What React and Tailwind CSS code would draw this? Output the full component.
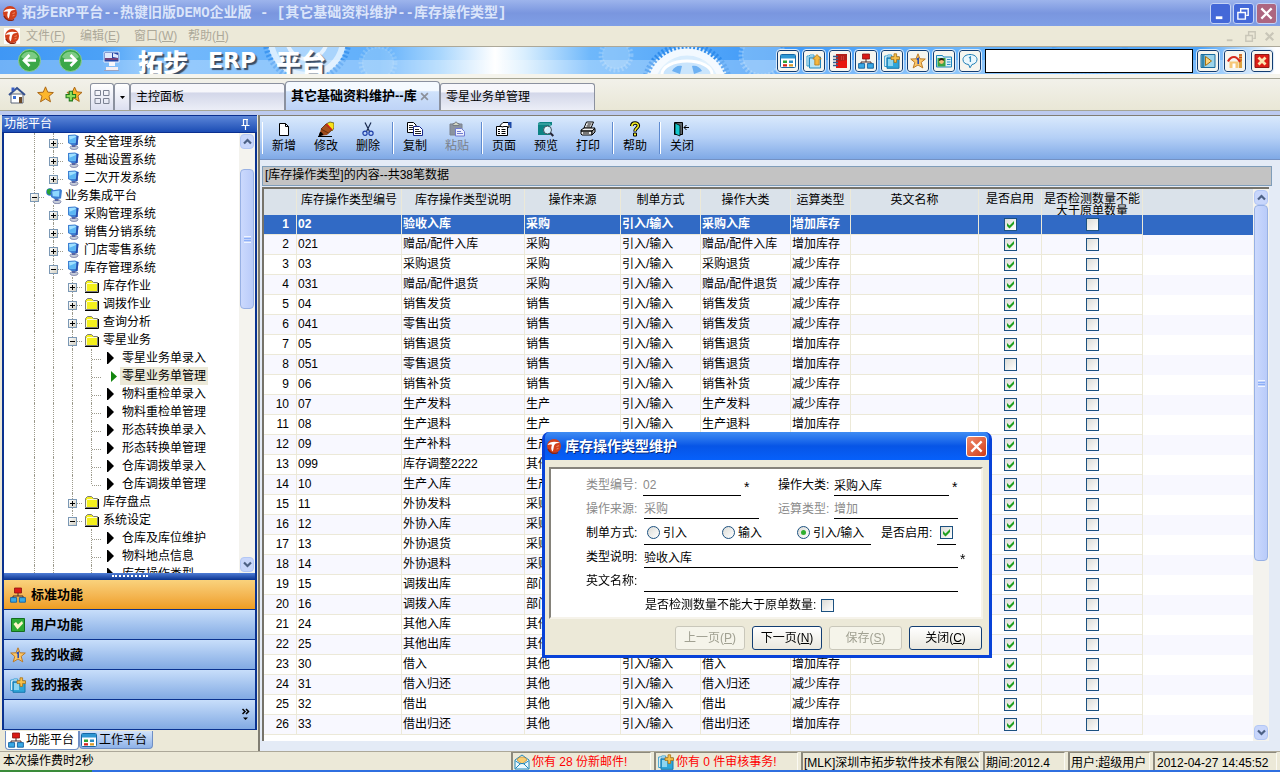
import React, { useState } from 'react';

const treeData = [
    { level: 2, type: 'plus', icon: 'pc', text: '安全管理系统' },
    { level: 2, type: 'plus', icon: 'pc', text: '基础设置系统' },
    { level: 2, type: 'plus', icon: 'pc', text: '二次开发系统', last: true },
    { level: 1, type: 'minus', icon: 'net', text: '业务集成平台' },
    { level: 2, type: 'plus', icon: 'pc', text: '采购管理系统' },
    { level: 2, type: 'plus', icon: 'pc', text: '销售分销系统' },
    { level: 2, type: 'plus', icon: 'pc', text: '门店零售系统' },
    { level: 2, type: 'minus', icon: 'pc', text: '库存管理系统' },
    { level: 3, type: 'plus', icon: 'folder', text: '库存作业' },
    { level: 3, type: 'plus', icon: 'folder', text: '调拨作业' },
    { level: 3, type: 'plus', icon: 'folder', text: '查询分析' },
    { level: 3, type: 'minus', icon: 'folder', text: '零星业务' },
    { level: 4, type: 'leaf', icon: 'arrow', text: '零星业务单录入' },
    { level: 4, type: 'leaf', icon: 'current', text: '零星业务单管理', selected: true },
    { level: 4, type: 'leaf', icon: 'arrow', text: '物料重检单录入' },
    { level: 4, type: 'leaf', icon: 'arrow', text: '物料重检单管理' },
    { level: 4, type: 'leaf', icon: 'arrow', text: '形态转换单录入' },
    { level: 4, type: 'leaf', icon: 'arrow', text: '形态转换单管理' },
    { level: 4, type: 'leaf', icon: 'arrow', text: '仓库调拨单录入' },
    { level: 4, type: 'leaf', icon: 'arrow', text: '仓库调拨单管理', last: true },
    { level: 3, type: 'plus', icon: 'folder', text: '库存盘点' },
    { level: 3, type: 'minus', icon: 'folder', text: '系统设定', last: true },
    { level: 4, type: 'leaf', icon: 'arrow', text: '仓库及库位维护', hideParent: true },
    { level: 4, type: 'leaf', icon: 'arrow', text: '物料地点信息', hideParent: true },
    { level: 4, type: 'leaf', icon: 'arrow', text: '库存操作类型', hideParent: true },
];

const rows = [
    ['02', '验收入库', '采购', '采购入库', '增加库存'],
    ['021', '赠品/配件入库', '采购', '赠品/配件入库', '增加库存'],
    ['03', '采购退货', '采购', '采购退货', '减少库存'],
    ['031', '赠品/配件退货', '采购', '赠品/配件退货', '减少库存'],
    ['04', '销售发货', '销售', '销售发货', '减少库存'],
    ['041', '零售出货', '销售', '销售发货', '减少库存'],
    ['05', '销售退货', '销售', '销售退货', '增加库存'],
    ['051', '零售退货', '销售', '销售退货', '增加库存'],
    ['06', '销售补货', '销售', '销售补货', '减少库存'],
    ['07', '生产发料', '生产', '生产发料', '减少库存'],
    ['08', '生产退料', '生产', '生产退料', '增加库存'],
    ['09', '生产补料', '生产', '生产补料', '减少库存'],
    ['099', '库存调整2222', '其他', '库存调整', '增加库存'],
    ['10', '生产入库', '生产', '生产入库', '增加库存'],
    ['11', '外协发料', '采购', '外协发料', '减少库存'],
    ['12', '外协入库', '采购', '外协入库', '增加库存'],
    ['13', '外协退货', '采购', '外协退货', '减少库存'],
    ['14', '外协退料', '采购', '外协退料', '增加库存'],
    ['15', '调拨出库', '部门', '调拨出库', '减少库存'],
    ['16', '调拨入库', '部门', '调拨入库', '增加库存'],
    ['24', '其他入库', '其他', '其他入库', '增加库存'],
    ['25', '其他出库', '其他', '其他出库', '减少库存'],
    ['30', '借入', '其他', '借入', '增加库存'],
    ['31', '借入归还', '其他', '借入归还', '减少库存'],
    ['32', '借出', '其他', '借出', '减少库存'],
    ['33', '借出归还', '其他', '借出归还', '增加库存'],
];

const headers = ['', '库存操作类型编号', '库存操作类型说明', '操作来源', '制单方式', '操作大类', '运算类型', '英文名称', '是否启用', '是否检测数量不能大于原单数量', ''];

/* ---------- icons ---------- */

function Icon({ size = 'size-4', children, box = '0 0 16 16' }) {
    return (
        <svg className={`${size} shrink-0`} viewBox={box} fill="none" aria-hidden="true">
            {children}
        </svg>
    );
}

const Logo = () => (
    <Icon>
        <circle cx="8" cy="8" r="7" fill="#d2401b" />
        <path d="M2 11a7 7 0 0 0 10 3.500" stroke="#8e2410" strokeWidth="1.400" />
        <path d="M1.500 7C3.500 3.500 8 3 14 4.600c-2.500.6-4.500.8-5.500 2.200-1 1.500-.6 4-1.800 6.700-1.700-1.300-1.800-4.300-.7-6.700-1.600-.5-3-.4-4.500.2z" fill="#fff" />
        <path d="M10.500 8.500l2.500-.8M10.500 11l2-.6" stroke="#f08a62" />
    </Icon>
);

const WindowGrid = () => (
    <Icon>
        <rect x=".5" y="1.500" width="15" height="13" rx="1" fill="#fff" stroke="#1667a5" />
        <path d="M1 2h14v3.500H1z" fill="#2f97d3" />
        <path d="M3 7.500h4v2.500H3z" fill="#2da336" />
        <path d="M9 7.500h4v2.500H9z" fill="#2a8cc4" />
        <path d="M3 11.200h4v2.300H3z" fill="#d4231a" />
        <path d="M9 11.200h4v2.300H9z" fill="#d99a2b" />
    </Icon>
);

const FolderUp = () => (
    <Icon>
        <path d="M1 13V3h2l1-1h4v2H3v9z" fill="#fff" stroke="#2c9bd0" />
        <path d="M3.500 15V5h4l1-1h6v11z" fill="#b8e4f6" stroke="#2287be" />
        <path d="M11 1.500l4.200 4.500h-2v6H8.800V6h-2z" fill="#f4b63e" stroke="#b87917" strokeWidth=".8" />
    </Icon>
);

const Notebook = () => (
    <Icon>
        <path d="M4 1h11v14H4z" fill="#e8150c" />
        <path d="M4 1h11v6L4 9z" fill="#b3201a" />
        <path d="M1 3.500h5M1 6.500h5M1 9.500h5M1 12.500h5" stroke="#355e8c" strokeWidth="1.500" />
        <path d="M9 4h4M9 6h4" stroke="#e9574c" strokeDasharray="1 1" />
    </Icon>
);

const OrgChart = () => (
    <Icon>
        <path d="M8 6v3M3 11V9h10v2" stroke="#4a2a2a" />
        <path d="M4.500 1h7v5h-7z" fill="#d91a16" stroke="#8b1210" strokeWidth=".8" />
        <path d="M.6 10.600h6v4.600h-6zM9.400 10.600h6v4.600h-6z" fill="#39a9e6" stroke="#155f9c" strokeWidth=".9" />
    </Icon>
);

const FolderPlus = () => (
    <Icon>
        <path d="M.7 13.500V3h2l1-1h4v2H3v9.500z" fill="#fff" stroke="#2c9bd0" />
        <path d="M3 15.300V5h4l1-1h7v11.300z" fill="#2fa5d8" stroke="#1877ad" />
        <path d="M4 6h5v7H4z" fill="#8dd5f0" />
        <path d="M10 .8h2.600v3h3v2.600h-3v3H10v-3H7V3.800h3z" fill="#f7c14b" stroke="#a86e12" strokeWidth=".8" />
    </Icon>
);

const StarOne = () => (
    <Icon>
        <path d="M8 .8l2 5 5.300.2-4.100 3.400 1.600 5.500L8 12l-4.800 2.900 1.600-5.500L.7 6 6 5.800z" fill="#fbc668" stroke="#b8731c" strokeWidth=".9" />
        <path d="M6.600 6.300l1.600-.8V11" stroke="#2248b4" strokeWidth="1.500" />
    </Icon>
);

const IdCard = () => (
    <Icon>
        <path d="M.5 2.500h6l1 1.500h8v10H.5z" fill="#d9f0fa" stroke="#1d86bd" />
        <path d="M1.500 5h8v8.500h-8z" fill="#39a442" />
        <circle cx="5.500" cy="8.500" r="2.400" fill="#f6bb75" />
        <path d="M2.800 8c0-4 5.400-4 5.400-.3L5.500 7z" fill="#291a10" />
        <path d="M11 6.500h3.500M11 9h3.500M11 11.500h3.500" stroke="#2b8cc4" />
    </Icon>
);

const Bubble = () => (
    <Icon>
        <path d="M8 1.500c4 0 7 2 7 5s-2.500 4.600-5 5L8 14.800 6.600 11.500C3 11.200 1 9.300 1 6.500s3-5 7-5z" fill="#eaf7fd" stroke="#1e7eb5" />
        <path d="M7 5l1.400-1v5" stroke="#3a8fc0" strokeWidth="1.300" />
    </Icon>
);

const PlayBox = () => (
    <Icon>
        <path d="M1 1.500h14v13H1z" fill="#9cd3ea" stroke="#1a6c9e" />
        <path d="M1.500 2h3v12h-3z" fill="#3487ad" />
        <path d="M5.500 3.500l6 4.500-6 4.500z" fill="#fdd682" stroke="#a5700e" />
    </Icon>
);

const HomeBox = () => (
    <Icon>
        <path d="M12 1h3v14h-3z" fill="#dda341" />
        <path d="M12 2h3M12 4.500h3M12 7h3" stroke="#c8441e" />
        <path d="M2.500 8.500h9V15h-9z" fill="#f6c878" />
        <path d="M5.500 10.500h3V15h-3z" fill="#fff" />
        <path d="M1 8.500C3 4.500 5 4 7 4s4 1.500 6 5" stroke="#d6281a" strokeWidth="2.200" />
    </Icon>
);

const CloseBox = () => (
    <Icon>
        <path d="M1 1.500h14v13H1z" fill="#dc1d16" stroke="#8f1713" />
        <path d="M4.500 4.500l7 7M11.500 4.500l-7 7" stroke="#fde5b0" strokeWidth="2.800" />
    </Icon>
);

const GreenCheck = () => (
    <Icon>
        <path d="M1.500 1.500h13v13h-13z" fill="#2dab34" stroke="#146d20" />
        <path d="M3.500 7l2.500-2 2 2.500L12 4l1 2.500-5.500 6z" fill="#fdf5c8" />
    </Icon>
);

const Mail = () => (
    <Icon>
        <path d="M1 6l7-5 7 5v9H1z" fill="#eaf8fe" stroke="#2187b8" />
        <path d="M3 6c1-4 9-4 10 0l-5 4z" fill="#f9cf73" stroke="#b9822a" strokeWidth=".7" />
        <path d="M1.500 14.500l5-5h3l5 5M1.500 7l5 3M14.500 7l-5 3" stroke="#2187b8" />
    </Icon>
);

const Computer = () => (
    <Icon>
        <path d="M3 1l7-.5 3.500 1.500-1 9-5 .5L3 9z" fill="#3d7fd2" />
        <path d="M4 2l6-.5 1 .8-.6 6.700-5.900-.6z" fill="#9fe0ff" />
        <path d="M4 6l7-3-.6 6-5.900-.6z" fill="#5ab6f4" />
        <path d="M12 2l1.500 0-1 9-2 .3z" fill="#2b4fae" />
        <ellipse cx="9" cy="13.500" rx="4" ry="2" fill="#c7cdda" stroke="#68709c" strokeWidth=".7" />
        <path d="M7 11h3.500v2H7z" fill="#5966a4" />
    </Icon>
);

const NetComputer = () => (
    <Icon>
        <circle cx="4" cy="4" r="3.800" fill="#3472cf" />
        <path d="M1 2c2-2 4-1.500 5 0L4 4l1 2-2 1-2-2z" fill="#28a234" />
        <path d="M5 2.500L14.500 1l1.500 1.500-1 8-6 .8L5 9z" fill="#3d7fd2" />
        <path d="M6.200 3.500L13.500 2.500l-.4 6.300-6.300-.6z" fill="#8fd8ff" />
        <ellipse cx="11" cy="13.700" rx="4" ry="2" fill="#c7cdda" stroke="#68709c" strokeWidth=".7" />
        <path d="M9 11h3.500v2H9z" fill="#5966a4" />
    </Icon>
);

const Folder = () => (
    <Icon>
        <path d="M1.500 13.500V4.500l2-2h4l2 2h4v9z" fill="#f4f01c" stroke="#7c7c7c" />
        <path d="M3 5.500h10M2.500 6v7" stroke="#fff" strokeWidth=".8" />
        <path d="M1 14.500h13.500V5" stroke="#000" />
    </Icon>
);

const Arrow = ({ green }) => (
    <Icon>
        {green ? <path d="M8 3l6 5.500L8 14z" fill="#13860f" /> : <path d="M4 2h1l6 6-6 6H4z" fill="#000" />}
    </Icon>
);

const treeIcons = {
    pc: <Computer />,
    net: <NetComputer />,
    folder: <Folder />,
    arrow: <Arrow />,
    current: <Arrow green />,
};

/* toolbar drawings */
const toolIcons = {
    add: (
        <Icon><path d="M3.500 2.500h6l3 3v9h-9z" fill="#fff" stroke="#000" /><path d="M9.500 2.500v3h3" stroke="#000" /></Icon>
    ),
    edit: (
        <Icon>
            <path d="M1 15l2-7 5-5 6 6-5 5z" fill="#9c4a1c" />
            <path d="M3 8l5-5 6 6-3.500 3z" fill="#a8501c" stroke="#3d1c08" strokeWidth=".6" />
            <path d="M8 3l4-2 4 1v5l-2 3z" fill="#f7e11b" stroke="#4a3d00" strokeWidth=".7" />
            <path d="M8.500 3l5.500 6" stroke="#d41c1c" strokeWidth="1.500" />
            <path d="M0 15.500h14M1 15l1.500-4 2.500 2.500z" stroke="#000" fill="#000" />
        </Icon>
    ),
    del: (
        <Icon>
            <path d="M5 1.500l4.500 9M11 1.500l-4.500 9" stroke="#1a2b50" strokeWidth="1.200" />
            <circle cx="5" cy="12.300" r="2.100" stroke="#1f3fa8" strokeWidth="1.200" />
            <circle cx="11" cy="12.300" r="2.100" stroke="#1f3fa8" strokeWidth="1.200" />
        </Icon>
    ),
    copy: (
        <Icon>
            <path d="M.5 1.500h6l2.500 2.500v7.500H.5z" fill="#fff" stroke="#000" />
            <path d="M2 4.500h4M2 6.500h5M2 8.500h5" stroke="#222" />
            <path d="M6.500 5.500h6l3 3v6h-9z" fill="#fff" stroke="#15268c" />
            <path d="M8 8.500h4M8 10.500h6M8 12.500h6" stroke="#222" />
        </Icon>
    ),
    paste: (
        <Icon>
            <path d="M1 3h12v11H1z" fill="#8b93a0" stroke="#7c838e" />
            <path d="M4 4.500V2.500h1.500l1-1.500h1l1 1.500H10v2z" fill="#d4d6c4" stroke="#777d85" />
            <path d="M6.500 7.500h6l3 3v4.500h-9z" fill="#eef0fd" stroke="#6f7bd0" />
            <path d="M8 10.500h4M8 12.500h6" stroke="#6f7bd0" />
        </Icon>
    ),
    page: (
        <Icon>
            <path d="M.5 5.500h11v9H.5z" fill="#fff" stroke="#000" />
            <path d="M2 8.500h2M5.500 8.500h4M2 10.500h2M5.500 10.500h4M2 12.500h2M5.500 12.500h4" stroke="#000" />
            <path d="M4 4.500l3-3h6v5l-2-1H8L6 6z" fill="#fff" stroke="#000" />
            <path d="M12 1h3.500v6H14V4h-2z" fill="#1c49a6" />
        </Icon>
    ),
    preview: (
        <Icon>
            <path d="M0 2l2-1h12v3l-2 1v9H0z" fill="#0c8383" />
            <path d="M0 3h12v9" stroke="#7fd0cc" strokeWidth=".7" />
            <circle cx="9.500" cy="9" r="4" fill="#d4eefa" stroke="#44525e" />
            <path d="M7.500 8.500a2 2 0 0 1 2-2" stroke="#fff" />
            <path d="M12.300 12l3 3" stroke="#223" strokeWidth="2" />
        </Icon>
    ),
    print: (
        <Icon>
            <path d="M6.500 1h7L11 7H4z" fill="#fff" stroke="#000" />
            <path d="M7.500 3h4M6.500 5h4" stroke="#000" />
            <path d="M1 9l3-2h11l-3 3H1zM1 10h11v4H2l-1-1z" fill="#f1f1f1" stroke="#000" />
            <path d="M12 10l3-2.500V11l-3 3z" fill="#aaa" stroke="#000" />
            <path d="M3 12h6" stroke="#000" />
        </Icon>
    ),
    help: (
        <Icon>
            <path d="M4.800 5c0-4 6.500-4 6.500-.3C11.300 7 8 7.200 8 10.500" stroke="#000" strokeWidth="3.600" />
            <path d="M4.800 5.500c0-4.500 6.500-4.500 6.500-.8C11.300 7 8 7.200 8 10" stroke="#f4ec24" strokeWidth="1.600" />
            <path d="M6.500 12h3v3h-3z" fill="#f4ec24" stroke="#000" />
        </Icon>
    ),
    close: (
        <Icon>
            <path d="M.5 1.500h8v12h-8z" fill="#5d6368" stroke="#000" />
            <path d="M1 2l5 2.500V15l-5-2z" fill="#14c6cc" stroke="#000" strokeWidth=".8" />
            <path d="M15 6.500h-5M12.500 4L10 6.500 12.500 9" stroke="#000" />
        </Icon>
    ),
};

function Gears() {
    return (
        <svg className="absolute left-0 top-0 h-full w-[1280px]" viewBox="0 0 1280 27" fill="none" aria-hidden="true">
            <circle cx="307" cy="-8" r="40" fill="#c6e3fc" opacity=".7" />
            <circle cx="307" cy="-8" r="40" stroke="#3f97f0" strokeWidth="9" strokeDasharray="2 2" />
            <circle cx="307" cy="-8" r="36" stroke="#d8edff" strokeWidth="6" />
            <circle cx="307" cy="-8" r="20" stroke="#fff" strokeWidth="4" opacity=".7" />
            <circle cx="378" cy="16" r="16" fill="#a8d4fb" opacity=".4" />
            <circle cx="378" cy="16" r="17" stroke="#a8d4fb" strokeWidth="5" strokeDasharray="2 2" opacity=".4" />
            <circle cx="616" cy="8" r="14" fill="#b5dafb" opacity=".4" />
            <circle cx="616" cy="8" r="15" stroke="#a8d4fb" strokeWidth="5" strokeDasharray="2 2" opacity=".5" />
            <circle cx="762" cy="8" r="20" fill="#b5dafb" opacity=".4" />
            <circle cx="762" cy="8" r="21" stroke="#a8d4fb" strokeWidth="5" strokeDasharray="2 2" opacity=".5" />
            <circle cx="687" cy="41" r="42" fill="#d7ecfd" />
            <circle cx="687" cy="41" r="42" stroke="#2f8cec" strokeWidth="8" strokeDasharray="2 2" />
            <circle cx="687" cy="41" r="36" stroke="#f2f9ff" strokeWidth="7" />
            <ellipse cx="687" cy="27" rx="25" ry="13" fill="#b9dcfb" stroke="#fff" strokeWidth="3" />
            <path d="M672 24c2-4 6-6 10-5l-2 8zM702 24c-2-4-6-6-10-5l2 8z" fill="#3e97ee" />
            <circle cx="1090" cy="-8" r="36" stroke="#4fa2f3" strokeWidth="6" strokeDasharray="2 2" />
        </svg>
    );
}

/* ---------- small controls ---------- */

function CheckBox({ label, ...props }) {
    return (
        <span className="inline-grid size-[13px] shrink-0 align-middle">
            <input
                type="checkbox"
                aria-label={label}
                className="peer col-start-1 row-start-1 size-[13px] appearance-none border border-[#1c5180] bg-linear-to-br from-[#dcdcd7] to-white"
                {...props}
            />
            <svg viewBox="0 0 13 13" className="pointer-events-none col-start-1 row-start-1 hidden size-[13px] peer-checked:block" aria-hidden="true">
                <path d="M3 5v3l2.500 2.500L10 6V3L5.500 7.500z" fill="#21a121" />
            </svg>
        </span>
    );
}

function RadioItem({ text, value, current, onChange, className }) {
    return (
        <label className={`flex items-center gap-[3px] ${className}`}>
            <span className="inline-grid size-[13px] shrink-0 place-items-center">
                <input
                    type="radio"
                    name="mode"
                    value={value}
                    checked={current === value}
                    onChange={() => onChange(value)}
                    className="peer col-start-1 row-start-1 size-[13px] appearance-none rounded-full border border-[#1c5180] bg-linear-to-br from-[#dcdcd7] to-white"
                />
                <span className="pointer-events-none col-start-1 row-start-1 hidden size-[5px] rounded-full bg-[#2fae2f] peer-checked:block" />
            </span>
            {text}
        </label>
    );
}

function Chevron({ up }) {
    return (
        <Icon size="size-[9px]" box="0 0 9 9">
            <path d={up ? 'M1 6.500L4.500 3 8 6.500' : 'M1 2.500L4.500 6 8 2.500'} stroke="#4d6185" strokeWidth="2.200" />
        </Icon>
    );
}

function ScrollBar({ thumb }) {
    return (
        <div className="flex w-4 shrink-0 flex-col bg-[#f4f3ee] px-px py-px">
            <button aria-label="向上滚动" className="grid h-[15px] place-items-center rounded-sm border border-[#b3c7f5] bg-[#c8d6fb]">
                <Chevron up />
            </button>
            <div className="flex min-h-0 flex-1 flex-col">
                <div className={`grid place-items-center rounded-sm border border-[#98b1e4] bg-linear-to-r from-[#cbd9fd] to-[#b9cbf9] ${thumb}`}>
                    <div className="h-[7px] w-[7px] border-y border-[#eef4fe] py-px">
                        <div className="h-[3px] border-y border-[#8cb0f8]" />
                    </div>
                </div>
            </div>
            <button aria-label="向下滚动" className="grid h-[15px] place-items-center rounded-sm border border-[#b3c7f5] bg-[#c8d6fb]">
                <Chevron />
            </button>
        </div>
    );
}

/* ---------- page parts ---------- */

function TitleBar() {
    return (
        <header className="flex h-[26px] shrink-0 items-center bg-linear-to-b from-[#9db4ec] via-[#7a96df] to-[#7f9fe6] pl-0.5 pr-[3px]">
            <Logo />
            <h1 className="ml-1 flex-1 whitespace-pre font-[Liberation_Mono,Noto_Sans_CJK_SC,monospace] text-[14px] font-bold leading-[20px] text-[#dbe5fa]">
                拓步ERP平台--热键旧版DEMO企业版 - [其它基础资料维护--库存操作类型]
            </h1>
            <div className="flex gap-0.5">
                <button aria-label="最小化" className="grid size-[21px] place-items-center rounded-[3px] border border-[#c5d3f5] bg-[#4468d8]">
                    <Icon size="size-[15px]"><path d="M3 11h7v3H3z" fill="#fff" /></Icon>
                </button>
                <button aria-label="还原" className="grid size-[21px] place-items-center rounded-[3px] border border-[#c5d3f5] bg-[#4468d8]">
                    <Icon size="size-[15px]"><path d="M2 7h8v7H2zM5 6V3h8v7h-2" stroke="#fff" strokeWidth="1.500" /></Icon>
                </button>
                <button aria-label="关闭" className="grid size-[21px] place-items-center rounded-[3px] border border-[#c5d3f5] bg-[#ad6680]">
                    <Icon size="size-[15px]"><path d="M2.500 2.500l11 11M13.500 2.500l-11 11" stroke="#fff" strokeWidth="2.400" /></Icon>
                </button>
            </div>
        </header>
    );
}

function MenuBar() {
    const menus = [['文件', 'F'], ['编辑', 'E'], ['窗口', 'W'], ['帮助', 'H']];
    return (
        <nav className="flex h-5 shrink-0 items-center bg-[#ece9d8] pl-1 pr-[3px] text-[#aca899]">
            <div className="bg-white"><Logo /></div>
            <div className="ml-1.5 flex gap-3.5">
                {menus.map(([name, key]) => (
                    <button key={key} className="w-10 whitespace-nowrap text-left">{name}(<u>{key}</u>)</button>
                ))}
            </div>
            <div className="ml-auto flex gap-1 text-[#c9c6b8]">
                <Icon size="size-[15px]"><path d="M3 11h6v2H3z" fill="currentColor" /></Icon>
                <Icon size="size-[15px]"><path d="M3 7h7v6H3zM6 6V3h7v7h-2" stroke="currentColor" strokeWidth="1.500" /></Icon>
                <Icon size="size-[15px]"><path d="M4 4l8 8M12 4l-8 8" stroke="currentColor" strokeWidth="2.400" /></Icon>
            </div>
        </nav>
    );
}

function BannerButton({ label, children }) {
    return (
        <button aria-label={label} className="grid size-[22px] place-items-center rounded-[3px] border border-[#123d72] bg-[#f6f5ef] outline outline-[#dcebfa]">
            {children}
        </button>
    );
}

function Banner() {
    const tools = [
        ['桌面', <WindowGrid />], ['上级', <FolderUp />], ['记事本', <Notebook />], ['结构', <OrgChart />],
        ['新建', <FolderPlus />], ['收藏', <StarOne />], ['名片', <IdCard />], ['消息', <Bubble />],
    ];
    return (
        <div className="shrink-0 border-y border-b-[#f5f4ec] border-t-[#aca899] bg-[#f5f4ec] pb-[3px]">
            <div className="relative flex h-[27px] items-center overflow-hidden bg-[linear-gradient(90deg,#3f97f5_0px,#4ba1f7_100px,#74b9fb_140px,#62b0fb_380px,#a8d6fd_440px,#ffffff_495px,#d8eefe_525px,#6fb8fb_590px,#3d98f7_780px,#6ab4f9_960px,#4ba2f7_1200px,#ffffff_1276px)]">
                <Gears />
                <div className="absolute inset-x-0 bottom-0 h-[14px] bg-white/25" />
                <div className="relative flex items-center gap-[18px] pl-[18px]">
                    <button aria-label="后退">
                        <Icon size="size-[23px]" box="0 0 23 23">
                            <circle cx="11.500" cy="11.500" r="11" fill="#3aa748" stroke="#8ecb9a" />
                            <path d="M3 8a9.500 9.500 0 0 1 17 0c-5 4-12 4-17 0z" fill="#7ccb84" />
                            <path d="M18 11.500H7M11.500 6L6 11.500l5.500 5.500" stroke="#fff" strokeWidth="2.600" />
                        </Icon>
                    </button>
                    <button aria-label="前进">
                        <Icon size="size-[23px]" box="0 0 23 23">
                            <circle cx="11.500" cy="11.500" r="11" fill="#3aa748" stroke="#8ecb9a" />
                            <path d="M3 8a9.500 9.500 0 0 1 17 0c-5 4-12 4-17 0z" fill="#7ccb84" />
                            <path d="M5 11.500h11M11.500 6l5.500 5.500-5.500 5.500" stroke="#fff" strokeWidth="2.600" />
                        </Icon>
                    </button>
                    <Icon size="size-[22px]" box="0 0 22 22">
                        <path d="M4 2h15v10H4z" fill="#2547a8" stroke="#e7effb" />
                        <path d="M5 3h7v5H5zM13 3l5 2v3l-5-1z" fill="#dfe9fb" />
                        <path d="M5 9h13" stroke="#c43a46" />
                        <path d="M9 12h6v4H9z" fill="#f7f7fb" />
                        <path d="M6 17h12v3H6z" fill="#f3eef2" />
                        <path d="M4 20.500h15" stroke="#9aa3c0" />
                    </Icon>
                </div>
                <div className="relative ml-4 flex items-center gap-5 whitespace-nowrap font-[Noto_Sans_CJK_SC,sans-serif] text-[25px] font-black leading-[26px] text-white [text-shadow:2px_2px_1px_#3b4c63]">
                    <span>拓步</span>
                    <span className="font-[DejaVu_Sans,sans-serif] text-[22px]">ERP</span>
                    <span>平台</span>
                </div>
                <div className="relative ml-auto flex items-center gap-1 pr-[7px]">
                    {tools.map(([label, icon]) => (
                        <BannerButton key={label} label={label}>{icon}</BannerButton>
                    ))}
                    <input aria-label="搜索" className="h-6 w-[208px] border border-black bg-white px-1" />
                    <div className="flex gap-[5px]">
                        <BannerButton label="执行"><PlayBox /></BannerButton>
                        <BannerButton label="主页"><HomeBox /></BannerButton>
                        <BannerButton label="退出"><CloseBox /></BannerButton>
                    </div>
                </div>
            </div>
        </div>
    );
}

function TabStrip() {
    const plain = 'h-[27px] w-[155px] rounded-t-[3px] border border-b-0 border-[#8b919f] bg-linear-to-b from-[#f7f7fb] from-30% via-[#d3d7e9] via-35% to-[#eceef7] px-[5px] text-left';
    return (
        <div className="flex h-[33px] shrink-0 items-end border-y border-[#a5a595] bg-linear-to-b from-[#f2f1ea] to-[#e9e7d6] pl-2">
            <div className="flex h-full items-center gap-[11px]">
                <button aria-label="主页">
                    <Icon size="size-[18px]" box="0 0 18 18">
                        <path d="M3 8h12v9H3z" fill="#fff" stroke="#5b6479" />
                        <path d="M1 9l8-7 8 7" stroke="#35518f" strokeWidth="2" />
                        <path d="M3.500 1.500h3V5h-3z" fill="#3a5fc4" />
                        <path d="M5 10h3v3H5z" fill="#3b6fd0" />
                        <path d="M11 11h3v6h-3z" fill="#6b4a28" />
                    </Icon>
                </button>
                <button aria-label="收藏夹">
                    <Icon size="size-[17px]"><path d="M8 .8l2.100 5 5.300.4-4.100 3.400 1.400 5.300L8 12l-4.700 2.900 1.400-5.300L.6 6.200 5.900 5.800z" fill="#fcb62c" stroke="#a86414" strokeWidth=".9" /></Icon>
                </button>
                <button aria-label="添加到收藏夹">
                    <Icon size="size-[17px]">
                        <path d="M9 1l2 4.500 5 .5-3.800 3.300 1.200 5.200L9 11.800 4.500 14l1-4.500L2 6l5-.5z" fill="#fcb62c" stroke="#a86414" strokeWidth=".9" />
                        <path d="M4 5h3v3h3v3H7v3H4v-3H1V8h3z" fill="#8fdf5c" stroke="#1e7a1c" />
                    </Icon>
                </button>
            </div>
            <button aria-label="平铺" className="ml-2 grid h-[27px] w-6 place-items-center rounded-t-[3px] border border-b-0 border-[#8b919f] bg-linear-to-b from-white to-[#dcdff0]">
                <Icon><path d="M1 1.500h5.500v5H1zM9.500 1.500H15v5H9.500zM1 9.500h5.500v5H1zM9.500 9.500H15v5H9.500z" stroke="#7c8293" /></Icon>
            </button>
            <button aria-label="标签列表" className="grid h-[27px] w-4 place-items-center rounded-t-[3px] border border-b-0 border-[#8b919f] bg-linear-to-b from-white to-[#dcdff0]">
                <Icon size="size-[5px]" box="0 0 5 5"><path d="M0 1h5L2.500 4z" fill="#000" /></Icon>
            </button>
            <button className={plain}>主控面板</button>
            <div className="flex h-[29px] w-[155px] items-center justify-between rounded-t-[4px] border border-b-0 border-[#8b919f] bg-linear-to-b from-[#f5faff] from-30% via-[#cfe2fb] via-35% to-[#bed3f6] px-[5px] pr-2.5">
                <button className="whitespace-nowrap text-[13px] font-bold">其它基础资料维护--库</button>
                <button aria-label="关闭标签"><Icon size="size-[9px]"><path d="M2 2l12 12M14 2L2 14" stroke="#8c9099" strokeWidth="3" /></Icon></button>
            </div>
            <button className={plain}>零星业务单管理</button>
        </div>
    );
}

function TreeRow({ node }) {
    const guides = [];
    for (let i = 1; i < node.level; i++) {
        const hidden = node.hideParent && i === 3;
        guides.push(
            <span key={i} className="flex w-[19px] shrink-0 justify-center">
                {!hidden && <span className="w-px border-l border-dotted border-[#9c9a8c]" />}
            </span>
        );
    }
    return (
        <li className="flex h-[18px] whitespace-nowrap">
            {guides}
            <span className="relative flex w-[19px] shrink-0 justify-center">
                <span className={`w-px border-l border-dotted border-[#9c9a8c] ${node.last ? 'h-[9px]' : 'h-full'}`} />
                <span className="absolute left-2.5 right-0 top-2.5 border-t border-dotted border-[#9c9a8c]" />
                {node.type !== 'leaf' && (
                    <button aria-label={node.type === 'plus' ? '展开' : '折叠'} className="absolute left-[5px] top-1.5 grid size-[9px] place-items-center border border-[#7b98b5] bg-linear-to-br from-white to-[#d2cfc2]">
                        <Icon size="size-[5px]" box="0 0 5 5">
                            <path d={node.type === 'plus' ? 'M0 2.500h5M2.500 0v5' : 'M0 2.500h5'} stroke="#000" />
                        </Icon>
                    </button>
                )}
            </span>
            <span className="flex w-[19px] shrink-0 items-center justify-center">{treeIcons[node.icon]}</span>
            <a href="#" className={`px-0.5 leading-[18px] ${node.selected ? 'bg-[#ece9d8]' : ''}`}>{node.text}</a>
        </li>
    );
}

function Sidebar() {
    const groups = [['标准功能', <OrgChart />], ['用户功能', <GreenCheck />], ['我的收藏', <StarOne />], ['我的报表', <FolderPlus />]];
    return (
        <aside className="flex w-[255px] shrink-0 flex-col">
            <h2 className="flex h-[18px] items-center justify-between border-y border-[#0a2f8f] bg-linear-to-b from-[#5c86d8] to-[#1b4cb4] pl-0.5 pr-1.5 text-white">
                功能平台
                <Icon size="size-3" box="0 0 12 12"><path d="M4 1.500h5M4.500 1v6M8 1v6M2.500 7.500h8M6.500 8v4" stroke="#fff" strokeWidth="1.200" /></Icon>
            </h2>
            <div className="flex min-h-0 flex-1 flex-col border-x-2 border-[#0a328f]">
                <div className="flex min-h-0 flex-1 overflow-hidden bg-white">
                    <ul className="min-w-0 flex-1 pl-[21px]">
                        {treeData.map((node) => <TreeRow key={node.text + node.level} node={node} />)}
                    </ul>
                    <ScrollBar thumb="mt-5 h-[140px]" />
                </div>
                <div className="flex h-[7px] shrink-0 justify-center bg-linear-to-b from-[#4f7dd6] to-[#0a328f] pt-0.5">
                    <div className="h-0 w-9 border-t-2 border-dotted border-white" />
                </div>
                {groups.map(([name, icon], i) => (
                    <button
                        key={name}
                        className={`flex h-[30px] shrink-0 items-center gap-[5px] border-b border-[#0a328f] pl-1.5 text-[13px] font-bold ${i === 0
                            ? 'bg-linear-to-b from-[#f9d27c] to-[#ee9d1d]'
                            : 'bg-linear-to-b from-[#c8defa] to-[#82aae3]'
                            }`}
                    >
                        {icon}
                        {name}
                    </button>
                ))}
                <div className="flex h-[30px] shrink-0 items-center justify-end border-b border-[#0a328f] bg-linear-to-b from-[#c8defa] to-[#82aae3] pr-[5px]">
                    <button aria-label="配置按钮">
                        <Icon size="h-[13px] w-2" box="0 0 8 13">
                            <path d="M.5 1L3 3.500.5 6M4 1l2.500 2.500L4 6" stroke="#000" strokeWidth="1.500" />
                            <path d="M1 9.500h5L3.500 12z" fill="#000" />
                        </Icon>
                    </button>
                </div>
            </div>
            <div className="flex h-[21px] shrink-0 items-start pl-[3px] pt-px">
                <button className="flex h-[19px] w-[74px] items-center gap-0.5 rounded-b-sm border border-t-0 border-[#6f8fc5] bg-white px-0.5">
                    <OrgChart />功能平台
                </button>
                <button className="flex h-[18px] w-[74px] items-center gap-0.5 rounded-b-sm border border-t-0 border-[#6f8fc5] bg-linear-to-b from-[#d3e3fa] to-[#8eb2e8] px-px">
                    <WindowGrid />工作平台
                </button>
            </div>
        </aside>
    );
}

function ToolBar() {
    const items = [
        ['新增', 'add'], ['修改', 'edit'], ['删除', 'del'], null,
        ['复制', 'copy'], ['粘贴', 'paste'], null,
        ['页面', 'page'], ['预览', 'preview'], ['打印', 'print'], null,
        ['帮助', 'help'], null,
        ['关闭', 'close'],
    ];
    return (
        <div className="flex h-11 shrink-0 items-center border-b border-[#7391c4] bg-linear-to-b from-[#d9e9fc] via-[#b5d0f6] to-[#7fa9e6] pl-0.5">
            <div className="h-8 w-px bg-white" />
            {items.map((item, i) => item ? (
                <button
                    key={item[0]}
                    disabled={item[1] === 'paste'}
                    className="flex w-[42px] flex-col items-center gap-0.5 leading-[15px] disabled:text-[#7a7f8a]"
                >
                    {toolIcons[item[1]]}
                    {item[0]}
                </button>
            ) : (
                <div key={i} className="flex w-[5px] justify-end"><div className="h-8 w-0.5 border-l border-r border-l-[#5f8bd0] border-r-white" /></div>
            ))}
        </div>
    );
}

function DataTable() {
    const [selected, setSelected] = useState(0);
    return (
        <div className="mr-[3px] flex min-h-0 flex-1 overflow-hidden border-l-2 border-t-2 border-[#76736a] bg-white">
            <div className="min-w-0 flex-1 overflow-hidden">
                <table className="w-full table-fixed border-separate border-spacing-0">
                    <colgroup>
                        <col className="w-[33px]" />
                        <col className="w-[105px]" />
                        <col className="w-[123px]" />
                        <col className="w-24" />
                        <col className="w-20" />
                        <col className="w-[90px]" />
                        <col className="w-[60px]" />
                        <col className="w-32" />
                        <col className="w-[63px]" />
                        <col className="w-[101px]" />
                        <col />
                    </colgroup>
                    <thead>
                        <tr className="bg-[#dae2ea]">
                            {headers.map((h, i) => (
                                <th key={i} className={`p-0 align-top font-normal ${i < 10 ? 'border-r border-[#ece9d8]' : ''}`}>
                                    <div className={`h-[26px] overflow-hidden leading-3 ${i < 9 ? 'whitespace-nowrap' : ''} ${i > 7 ? 'pt-1' : 'pt-[5px]'}`}>{h}</div>
                                </th>
                            ))}
                        </tr>
                    </thead>
                    <tbody>
                        {rows.map(([code, name, source, kind, calc], i) => {
                            const cells = [code, name, source, '引入/输入', kind, calc, ''];
                            const active = i === selected;
                            const line = 'border-b border-r border-[#ece9d8] p-0';
                            return (
                                <tr
                                    key={code}
                                    onClick={() => setSelected(i)}
                                    className={`leading-[17px] ${active ? 'bg-[#316ac5] font-bold text-white' : i % 2 ? 'bg-[#f8f8ff]' : 'bg-white'}`}
                                >
                                    <td className={`${line} h-5 pr-[7px] text-right`}>{i + 1}</td>
                                    {cells.map((text, c) => (
                                        <td key={c} className={`${line} overflow-hidden whitespace-nowrap pl-px`}>{text}</td>
                                    ))}
                                    <td className={`${line} text-center`}><div className="flex justify-center"><CheckBox label={`是否启用 ${code}`} defaultChecked={code !== '051'} /></div></td>
                                    <td className={line}><div className="flex justify-center"><CheckBox label={`是否检测数量 ${code}`} /></div></td>
                                    <td className="p-0" />
                                </tr>
                            );
                        })}
                    </tbody>
                </table>
            </div>
            <ScrollBar thumb="h-[356px]" />
        </div>
    );
}

function DialogButton({ text, hotkey, disabled, onClick, width }) {
    return (
        <button
            disabled={disabled}
            onClick={onClick}
            className={`h-6 rounded-[3px] border border-[#123d72] bg-linear-to-b from-white to-[#eae8df] disabled:border-[#c9c7ba] disabled:bg-none disabled:bg-[#f5f4ea] disabled:text-[#a1a192] ${width}`}
        >
            {text}(<u>{hotkey}</u>)
        </button>
    );
}

function EditDialog({ onClose }) {
    const [mode, setMode] = useState('both');
    const field = 'h-[22px] border-b border-black bg-transparent px-0 outline-none';
    const grey = 'text-[#8a8a8a]';
    return (
        <section role="dialog" aria-label="库存操作类型维护" className="absolute left-[542px] top-[432px] w-[450px] rounded-t-[7px] border-x-[3px] border-b-[3px] border-[#0842d8] bg-[#0842d8]">
            <div className="flex h-7 items-center rounded-t-[5px] bg-linear-to-b from-[#3f8cf3] via-[#0755e6] to-[#0660fb] pl-px pr-0.5">
                <Logo />
                <h2 className="ml-[3px] flex-1 text-[14px] font-bold leading-5 text-white [text-shadow:1px_1px_#0a2c80]">库存操作类型维护</h2>
                <button aria-label="关闭" onClick={onClose} className="grid size-[21px] place-items-center rounded-[3px] border border-white bg-linear-to-br from-[#f08a6a] to-[#cf3a12]">
                    <Icon size="size-[15px]"><path d="M2.500 2.500l11 11M13.500 2.500l-11 11" stroke="#fff" strokeWidth="2.400" /></Icon>
                </button>
            </div>
            <div className="bg-[#ece9d8] px-1 pb-[5px] pt-[7px]">
                <div className="mr-0.5 border-b-2 border-l-2 border-r-2 border-t-2 border-b-[#f6f3ea] border-l-[#85827a] border-r-[#f6f3ea] border-t-[#85827a] bg-white pl-[35px] pt-1">
                    <div className={`flex h-6 items-center ${grey}`}>
                        <label htmlFor="code" className="w-[57px]">类型编号:</label>
                        <input id="code" className={`${field} w-[98px]`} defaultValue="02" disabled />
                        <span className="w-[37px] pl-[3px] pt-1 text-[14px] text-black">*</span>
                        <label htmlFor="kind" className="w-14 text-black">操作大类:</label>
                        <input id="kind" className={`${field} w-[115px] text-black`} defaultValue="采购入库" />
                        <span className="pl-[3px] pt-1 text-[14px] text-black">*</span>
                    </div>
                    <div className={`flex h-6 items-start ${grey}`}>
                        <label htmlFor="source" className="w-[58px] leading-6">操作来源:</label>
                        <input id="source" className={`${field} w-[115px]`} defaultValue="采购" disabled />
                        <label htmlFor="calc" className="ml-[19px] w-14 leading-6">运算类型:</label>
                        <input id="calc" className={`${field} w-[124px]`} defaultValue="增加" disabled />
                    </div>
                    <fieldset className="flex h-6 items-center">
                        <legend className="float-left w-[58px] leading-6">制单方式:</legend>
                        <div className="flex h-6 w-[227px] border-b border-black pl-[3px]">
                            <RadioItem text="引入" value="in" current={mode} onChange={setMode} className="w-[75px]" />
                            <RadioItem text="输入" value="input" current={mode} onChange={setMode} className="w-[75px]" />
                            <RadioItem text="引入/输入" value="both" current={mode} onChange={setMode} className="w-[74px]" />
                        </div>
                        <label htmlFor="enabled" className="ml-2.5 w-14">是否启用:</label>
                        <span className="flex h-6 w-[19px] items-center justify-center border-b border-black">
                            <CheckBox id="enabled" defaultChecked />
                        </span>
                    </fieldset>
                    <div className="flex h-6 items-center">
                        <label htmlFor="desc" className="w-[58px]">类型说明:</label>
                        <input id="desc" autoFocus className={`${field} w-[314px]`} defaultValue="验收入库" />
                        <span className="pl-0.5 pt-1 text-[14px]">*</span>
                    </div>
                    <div className="flex h-6 items-center">
                        <label htmlFor="en" className="w-[58px]">英文名称:</label>
                        <input id="en" className={`${field} w-[314px]`} />
                    </div>
                    <div className="flex h-6 items-center gap-[5px] pl-[59px]">
                        <label htmlFor="limit">是否检测数量不能大于原单数量:</label>
                        <CheckBox id="limit" />
                    </div>
                </div>
                <div className="mt-[7px] flex justify-end gap-[7px] pr-[3px]">
                    <DialogButton text="上一页" hotkey="P" width="w-[70px]" disabled />
                    <DialogButton text="下一页" hotkey="N" width="w-[70px]" />
                    <DialogButton text="保存" hotkey="S" width="w-[73px]" disabled />
                    <DialogButton text="关闭" hotkey="C" width="w-[73px]" onClick={onClose} />
                </div>
            </div>
        </section>
    );
}

function StatusBar() {
    const cell = 'h-full overflow-hidden whitespace-nowrap border-l-2 border-r border-t border-l-[#8c897c] border-r-[#fbfaf3] border-t-[#8c897c]';
    return (
        <footer className="flex h-[19px] shrink-0 gap-[3px] overflow-hidden border-t border-[#aca899] bg-[#ece9d8] pr-[3px]">
            <div className="flex-1 truncate pl-[3px] leading-[18px]">本次操作费时2秒</div>
            <div className={`${cell} flex w-[140px] items-center gap-0.5 pl-px text-[#ff0000]`}><Mail />你有 28 份新邮件!</div>
            <div className={`${cell} flex w-[144px] items-center gap-0.5 pl-0.5 text-[#ff0000]`}><FolderPlus />你有 0 件审核事务!</div>
            <div className={`${cell} w-[179px] pl-px pt-0.5 leading-4`}>[MLK]深圳市拓步软件技术有限公</div>
            <div className={`${cell} w-[82px] pl-px pt-0.5 leading-4`}>期间:2012.4</div>
            <div className={`${cell} w-[82px] pl-px pt-0.5 leading-4`}>用户:超级用户</div>
            <div className={`${cell} w-[124px] pl-0.5 pt-0.5 leading-4`}>2012-04-27 14:45:52</div>
        </footer>
    );
}

function App() {
    const [open, setOpen] = useState(true);
    return (
        <div className="relative flex h-screen flex-col overflow-hidden bg-[#ece9d8] font-[Liberation_Sans,Noto_Sans_CJK_SC,sans-serif] text-[12px] leading-4 text-black">
            <TitleBar />
            <MenuBar />
            <Banner />
            <TabStrip />
            <div className="h-1 shrink-0 bg-[#bccaef]" />
            <main className="flex min-h-0 flex-1 pl-0.5">
                <Sidebar />
                <div className="ml-px flex min-w-0 flex-1 flex-col border-l-2 border-t border-[#807d72] bg-[#e4ebf6] pb-2.5">
                    <ToolBar />
                    <div className="flex min-h-0 flex-1 flex-col pl-0.5 pr-2 pt-1.5">
                        <div className="mb-px h-5 shrink-0 border border-[#7f9db9] bg-[#c3c3c3] pl-0.5 leading-[17px]">[库存操作类型]的内容--共38笔数据</div>
                        <DataTable />
                    </div>
                </div>
            </main>
            <StatusBar />
            <div className="flex h-0.5 shrink-0 bg-[#2f6fe0]"><div className="w-[92px] bg-[#3a8b3a]" /></div>
            {open && <EditDialog onClose={() => setOpen(false)} />}
        </div>
    );
}

export default App;
